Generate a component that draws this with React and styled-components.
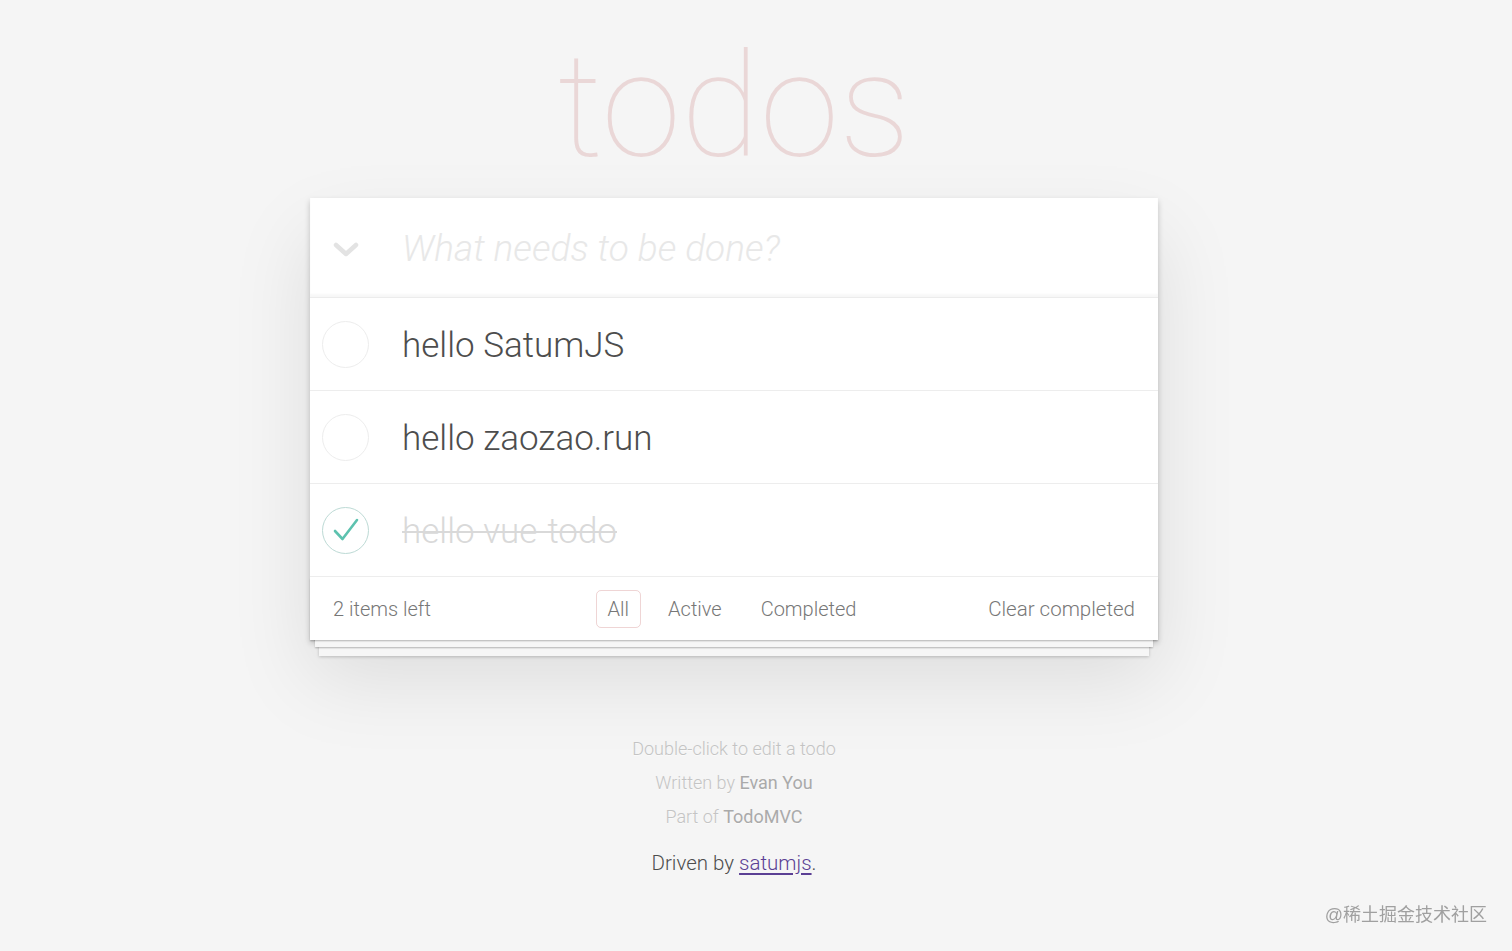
import React from "react";
import styled, { createGlobalStyle } from "styled-components";

const GlobalStyle = createGlobalStyle`
  html, body { margin: 0; padding: 0; }
  body {
    background: #f5f5f5;
    font-family: "Helvetica Neue", Roboto, "Liberation Sans", Arial, sans-serif;
    font-weight: 300;
    color: #4d4d4d;
    -webkit-font-smoothing: antialiased;
  }
  * { box-sizing: border-box; }
`;

const Page = styled.div`
  width: 1468px;
  min-height: 951px;
  display: flex;
  flex-direction: column;
  align-items: center;
`;

const Title = styled.h1`
  margin: 0 0 20px;
  padding-top: 35px;
  height: 178px;
  font-size: 144px;
  line-height: 144px;
  font-weight: 100;
  color: rgba(175, 47, 47, 0.15);
  text-align: center;
`;

const Card = styled.section`
  position: relative;
  width: 848px;
  background: #fff;
  box-shadow: 0 3px 6px rgba(0, 0, 0, 0.2), 0 38px 77px rgba(0, 0, 0, 0.1);
`;

const Header = styled.header`
  height: 100px;
  display: flex;
  align-items: center;
  border-bottom: 1px solid #ececec;
  box-shadow: inset 0 -3px 2px rgba(0, 0, 0, 0.03);
`;

const ToggleAll = styled.div`
  width: 92px;
  display: flex;
  justify-content: center;
  padding-right: 20px;
  padding-top: 4px;
`;

const NewTodo = styled.input`
  flex: 1;
  height: 100%;
  border: 0;
  outline: none;
  background: transparent;
  padding: 2px 20px 0 0;
  font-family: inherit;
  font-size: 37px;
  font-weight: 300;
  color: #4d4d4d;
  &::placeholder {
    font-style: italic;
    font-weight: 300;
    color: #e8e8e8;
  }
`;

const List = styled.ul`
  margin: 0;
  padding: 0;
  list-style: none;
`;

const Item = styled.li`
  height: 93px;
  display: flex;
  align-items: center;
  border-bottom: 1px solid #ededed;
  padding-left: 12px;
`;

const Circle = styled.span`
  width: 47px;
  height: 47px;
  flex: none;
  border-radius: 50%;
  border: 1.5px solid ${(p) => (p.$done ? "#bddad5" : "#ededed")};
  display: flex;
  align-items: center;
  justify-content: center;
`;

const Label = styled.label`
  margin: 4px 0 0 33px;
  font-size: 35px;
  font-weight: 300;
  line-height: 1.2;
  color: ${(p) => (p.$done ? "#d9d9d9" : "#4d4d4d")};
  text-decoration: ${(p) => (p.$done ? "line-through" : "none")};
  text-decoration-thickness: 2px;
`;

const Footer = styled.footer`
  position: relative;
  height: 63px;
  display: grid;
  grid-template-columns: 1fr auto 1fr;
  align-items: center;
  padding: 0 23px;
  font-size: 20px;
  color: #777;
  &::before {
    content: "";
    position: absolute;
    left: 0;
    right: 0;
    bottom: 0;
    height: 63px;
    pointer-events: none;
    box-shadow: 0 1.5px 1.5px rgba(0, 0, 0, 0.2),
      0 12px 0 -5px #f6f6f6,
      0 13.5px 1.5px -5px rgba(0, 0, 0, 0.2),
      0 25px 0 -9px #f6f6f6,
      0 26px 3px -9px rgba(0, 0, 0, 0.2);
  }
`;

const Count = styled.span`
  position: relative;
  justify-self: start;
`;

const Filters = styled.ul`
  position: relative;
  margin: 0 4px 0 0;
  padding: 0;
  list-style: none;
  display: flex;
  gap: 15px;
`;

const FilterLink = styled.a`
  display: block;
  padding: 6px 11px;
  border: 1px solid ${(p) => (p.$selected ? "rgba(175, 47, 47, 0.2)" : "transparent")};
  border-radius: 5px;
  color: inherit;
  text-decoration: none;
  cursor: pointer;
`;

const Clear = styled.button`
  position: relative;
  justify-self: end;
  border: 0;
  background: none;
  padding: 0;
  font-family: inherit;
  font-size: 20.5px;
  font-weight: 300;
  color: #777;
  cursor: pointer;
`;

const Info = styled.footer`
  margin-top: 92px;
  text-align: center;
  font-size: 18px;
  line-height: 34px;
  color: #c4c4c4;
  text-shadow: 0 1px 0 rgba(255, 255, 255, 0.5);
  p { margin: 0; }
`;

const InfoLink = styled.a`
  color: #aaaaaa;
  font-weight: 400;
  text-decoration: none;
`;

const Driven = styled.p`
  margin: 14px 0 0;
  font-size: 20.5px;
  line-height: 30px;
  color: #4d4d4d;
  text-align: center;
`;

const DrivenLink = styled.a`
  color: #5b3f94;
  text-decoration: underline;
  text-underline-offset: 3px;
`;

const Watermark = styled.div`
  position: fixed;
  right: 25px;
  bottom: 25px;
  font-family: "Liberation Sans", "Noto Sans CJK SC", sans-serif;
  font-weight: 400;
  font-size: 18px;
  color: #a0a0a0;
`;

const Chevron = () => (
  <svg width="26" height="16" viewBox="0 0 26 16">
    <path d="M3 3 L13 12 L23 3" fill="none" stroke="#e3e3e3" strokeWidth="4.5" strokeLinecap="round" strokeLinejoin="round" />
  </svg>
);

const Check = () => (
  <svg width="30" height="26" viewBox="0 0 30 26">
    <path d="M4 14 L11.5 22 L26 3" fill="none" stroke="#5dc2af" strokeWidth="2.6" strokeLinecap="round" strokeLinejoin="round" />
  </svg>
);

const todos = [
  { text: "hello SatumJS", done: false },
  { text: "hello zaozao.run", done: false },
  { text: "hello vue-todo", done: true },
];

export default function App() {
  return (
    <>
      <GlobalStyle />
      <Page>
        <Title>todos</Title>
        <Card>
          <Header>
            <ToggleAll>
              <Chevron />
            </ToggleAll>
            <NewTodo placeholder="What needs to be done?" />
          </Header>
          <List>
            {todos.map((t) => (
              <Item key={t.text}>
                <Circle $done={t.done}>{t.done && <Check />}</Circle>
                <Label $done={t.done}>{t.text}</Label>
              </Item>
            ))}
          </List>
          <Footer>
            <Count>2 items left</Count>
            <Filters>
              <li><FilterLink $selected>All</FilterLink></li>
              <li><FilterLink>Active</FilterLink></li>
              <li><FilterLink>Completed</FilterLink></li>
            </Filters>
            <Clear>Clear completed</Clear>
          </Footer>
        </Card>
        <Info>
          <p>Double-click to edit a todo</p>
          <p>Written by <InfoLink>Evan You</InfoLink></p>
          <p>Part of <InfoLink>TodoMVC</InfoLink></p>
        </Info>
        <Driven>
          Driven by <DrivenLink>satumjs</DrivenLink>.
        </Driven>
      </Page>
      <Watermark>@稀土掘金技术社区</Watermark>
    </>
  );
}
